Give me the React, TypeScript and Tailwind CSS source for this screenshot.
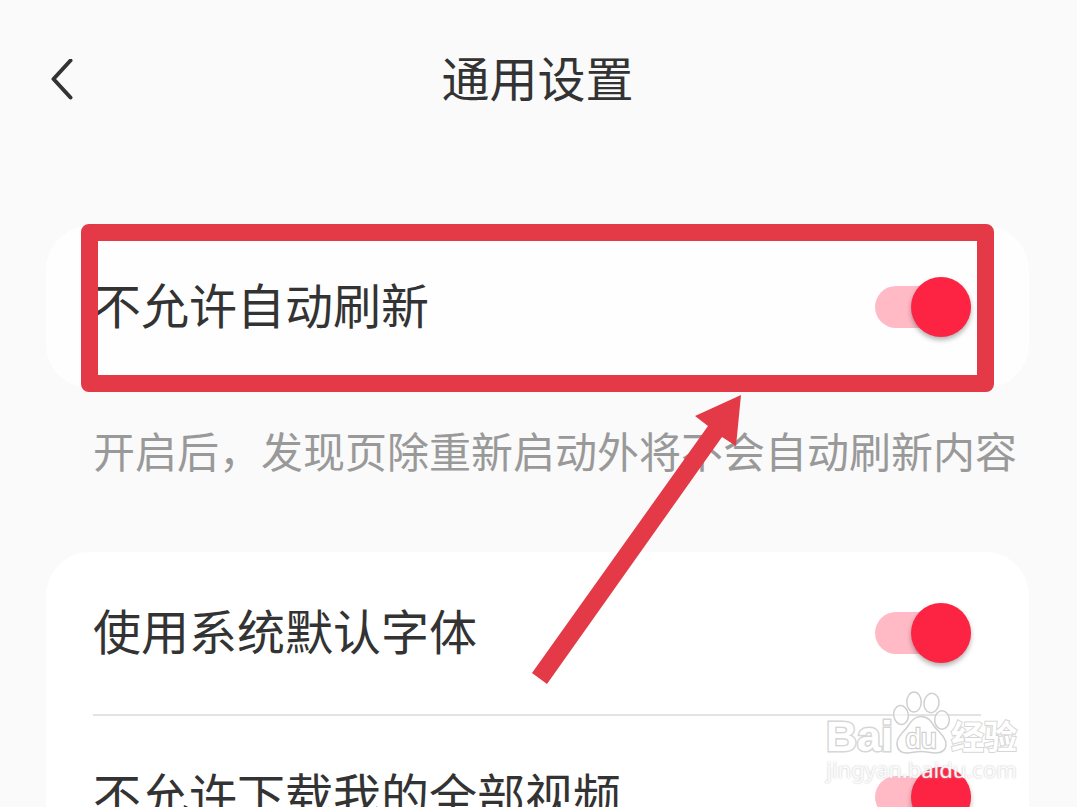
import { useState } from "react";

function Toggle({ id, defaultOn = true }: { id: string; defaultOn?: boolean }) {
  const [on, setOn] = useState(defaultOn);
  return (
    <span className="relative flex h-[60px] w-24 shrink-0 items-center">
      <input
        id={id}
        type="checkbox"
        role="switch"
        checked={on}
        onChange={(e) => setOn(e.target.checked)}
        className="peer h-[42px] w-full cursor-pointer appearance-none rounded-full bg-gray-200 checked:bg-[#ffbac6]"
      />
      <span className="pointer-events-none absolute left-0 top-0 size-[60px] rounded-full bg-white shadow-[0_3px_5px_rgba(0,0,0,0.3)] peer-checked:left-auto peer-checked:right-0 peer-checked:bg-[#fc2442]" />
    </span>
  );
}

function Row({ id, label }: { id: string; label: string }) {
  return (
    <div className="flex h-[162px] items-center justify-between pl-[47px] pr-[58px]">
      <label htmlFor={id} className="pb-2 text-[48px] leading-[60px] text-[#333333]">
        {label}
      </label>
      <Toggle id={id} />
    </div>
  );
}

function Arrow() {
  return (
    <svg
      viewBox="0 0 210 290"
      className="pointer-events-none absolute right-72 top-[169px] z-10 h-[290px] w-[210px]"
      aria-hidden="true"
    >
      <path d="M210 0 L164 21 L177 31 L1 278 L16 289 L191 42 L205 51 Z" fill="#e43946" />
    </svg>
  );
}

function Watermark() {
  return (
    <div className="pointer-events-none absolute right-[60px] top-[691px] z-20 w-[191px] text-white">
      <div className="flex h-[63px] items-end">
        <span className="font-['Liberation_Sans',sans-serif] text-[43px] font-bold leading-[36px] [-webkit-text-stroke:3px_#d6d6d6] [paint-order:stroke]">
          Bai
        </span>
        <svg viewBox="0 0 58 64" className="h-16 w-[58px] shrink-0" aria-hidden="true">
          <g fill="#ffffff" fillOpacity="0.6" stroke="#d0d0d0" strokeWidth="1.5">
            <ellipse cx="8" cy="25" rx="7.3" ry="9.5" transform="rotate(-8 8 25)" />
            <ellipse cx="21" cy="12" rx="7.2" ry="10" />
            <ellipse cx="38.500" cy="13" rx="7.5" ry="9.700" transform="rotate(8 38.5 13)" />
            <ellipse cx="49" cy="30" rx="7.3" ry="9.300" />
            <path d="M28 26.500 C35 26.500 38 31 41 36 C45 42 53 46 53 54 C53 61 48 63 42 63 C37 63 34 61.500 28 61.500 C22 61.500 19 63 14 63 C7 63 4 59 4 53 C4 46 11 42 15 36 C19 30 22 26.500 28 26.500 Z" />
          </g>
          <text
            x="28"
            y="58"
            textAnchor="middle"
            fill="#ffffff"
            stroke="#d0d0d0"
            strokeWidth="2.500"
            paintOrder="stroke"
            fontFamily="Liberation Sans, sans-serif"
            fontSize="28"
          >
            du
          </text>
        </svg>
        <span className="whitespace-nowrap text-[33px] font-bold leading-[38px] [-webkit-text-stroke:2px_#d6d6d6] [paint-order:stroke]">
          经验
        </span>
      </div>
      <div className="text-center font-['Noto_Sans',sans-serif] text-[22px] leading-[30px] text-white/90 [text-shadow:0_0_2px_#bcbcbc]">
        jingyan.baidu.com
      </div>
    </div>
  );
}

export default function App() {
  return (
    <div className="relative h-screen overflow-hidden bg-[#fafafa] font-['Noto_Sans_CJK_SC',sans-serif]">
      <header className="grid h-40 grid-cols-[96px_1fr_96px] items-center pl-[30px] pr-8">
        <button type="button" aria-label="返回" className="flex h-16 w-16 items-center justify-center">
          <svg viewBox="0 0 24 42" className="h-[42px] w-6" fill="none" aria-hidden="true">
            <path
              d="M20.500 1.500 L3.500 20 L20.500 38.500"
              stroke="#333333"
              strokeWidth="4"
              strokeLinecap="round"
              strokeLinejoin="round"
            />
          </svg>
        </button>
        <h1 className="pb-2 text-center text-[48px] leading-[60px] text-[#333333]">通用设置</h1>
      </header>

      <main className="pl-[46px] pr-12 pt-[66px]">
        <section className="relative">
          <div className="rounded-[44px] bg-[#fefefe]">
            <Row id="auto-refresh" label="不允许自动刷新" />
          </div>
          <div className="pointer-events-none absolute -top-0.5 left-[35px] right-[35px] h-[168px] rounded-lg border-[17px] border-[#e43946]" />
          <p className="whitespace-nowrap pb-[72px] pl-[47px] pt-8 text-[42px] leading-[60px] text-[#999999]">
            开启后，发现页除重新启动外将不会自动刷新内容
          </p>
          <Arrow />
        </section>

        <section className="rounded-[44px] bg-white">
          <Row id="system-font" label="使用系统默认字体" />
          <hr className="ml-[47px] mr-12 h-0.5 border-0 bg-[#e3e3e3]" />
          <Row id="no-download" label="不允许下载我的全部视频" />
        </section>
      </main>
      <Watermark />
    </div>
  );
}
